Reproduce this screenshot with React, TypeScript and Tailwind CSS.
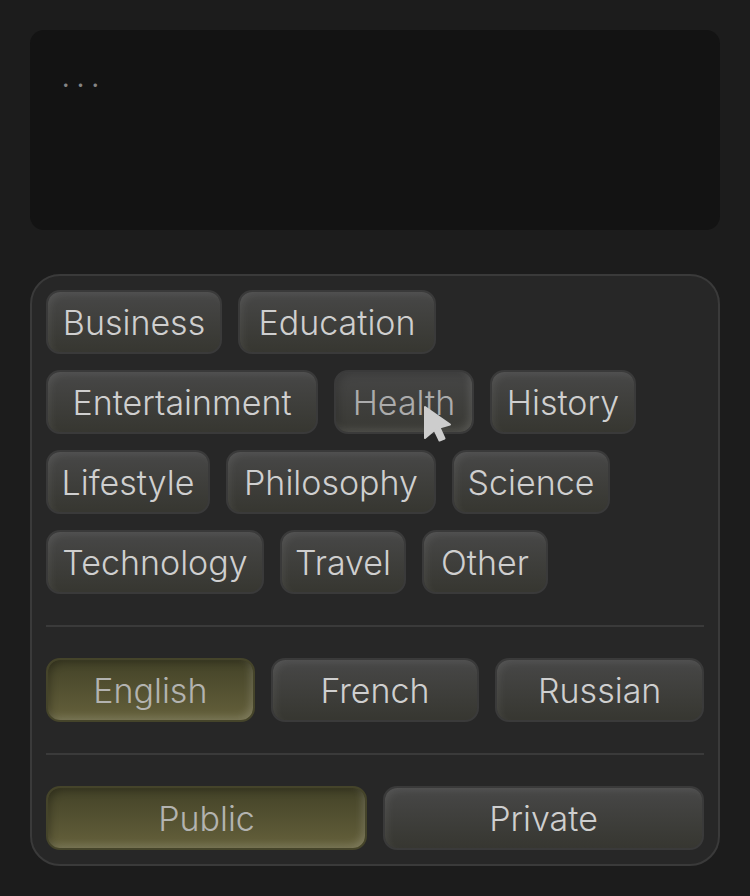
import { useState } from "react";
import clsx from "clsx";

const topics = [
  { name: "Business", width: "w-[176px]" },
  { name: "Education", width: "w-[198px]" },
  { name: "Entertainment", width: "w-[272px]" },
  { name: "Health", width: "w-[140px]" },
  { name: "History", width: "w-[146px]" },
  { name: "Lifestyle", width: "w-[164px]" },
  { name: "Philosophy", width: "w-[210px]" },
  { name: "Science", width: "w-[158px]" },
  { name: "Technology", width: "w-[218px]" },
  { name: "Travel", width: "w-[126px]" },
  { name: "Other", width: "w-[126px]" },
];

const looks = {
  idle: "border-[#3a3a3a] bg-linear-to-b from-[#484848] to-[#363630] text-[#cfcfcf] shadow-[inset_4px_4px_8px_-2px_#ffffff14]",
  pressed:
    "border-[#3a3a3a] bg-linear-to-b from-[#464646] to-[#393934] text-[#acacac] shadow-[inset_4px_4px_8px_-2px_#0000002e,inset_-4px_-4px_8px_-2px_#ffffff24]",
  active:
    "border-[#45442a] bg-linear-to-b from-[#424127] to-[#66623c] text-[#b3b3b0] shadow-[inset_4px_4px_8px_-2px_#0000004d,inset_-4px_-4px_8px_-2px_#ffffff30]",
};

type ChipProps = {
  label: string;
  look: keyof typeof looks;
  width: string;
  onClick?: () => void;
};

function Chip({ label, look, width, onClick }: ChipProps) {
  return (
    <button
      type="button"
      aria-pressed={look === "active"}
      onClick={onClick}
      className={clsx(
        "flex h-16 items-center justify-center rounded-[14px] border-2 bg-origin-border pt-0.5 text-[34px] leading-10 font-light whitespace-nowrap",
        looks[look],
        width,
      )}
    >
      {label}
    </button>
  );
}

function Pointer() {
  return (
    <svg
      className="pointer-events-none absolute top-[34px] left-[89px] h-10 w-8"
      viewBox="0 0 32 40"
      fill="#cdcdcd"
      stroke="#cdcdcd"
      strokeWidth="2"
      strokeLinejoin="round"
      aria-hidden="true"
    >
      <path d="M2 3 L27 20.500 L16.500 23.500 L21.500 34.500 L16.500 36.500 L11.500 26 L2 34 Z" />
    </svg>
  );
}

function Choices({ options, initial }: { options: string[]; initial: string }) {
  const [chosen, setChosen] = useState(initial);
  return (
    <div className="flex gap-4">
      {options.map((option) => (
        <Chip
          key={option}
          label={option}
          look={option === chosen ? "active" : "idle"}
          width="min-w-0 flex-1"
          onClick={() => setChosen(option)}
        />
      ))}
    </div>
  );
}

export default function App() {
  return (
    <main className="flex min-h-screen flex-col gap-11 bg-[#1c1c1c] p-[30px] font-['Inter','Liberation_Sans',sans-serif]">
      <textarea
        aria-label="Message"
        placeholder=". . ."
        className="block h-[200px] w-full resize-none rounded-[14px] bg-[#131313] px-8 py-8 text-[26px] leading-8 text-[#cfcfcf] outline-none placeholder:text-[#858585]"
      />
      <section className="rounded-[30px] border-2 border-[#3a3a3a] bg-[#272727] p-3.5">
        <div className="flex flex-wrap gap-4">
          {topics.map(({ name, width }) =>
            name === "Health" ? (
              <div key={name} className="relative">
                <Chip label={name} look="pressed" width={width} />
                <Pointer />
              </div>
            ) : (
              <Chip key={name} label={name} look="idle" width={width} />
            ),
          )}
        </div>
        <hr className="my-[31px] border-t-2 border-[#3a3a3a]" />
        <Choices options={["English", "French", "Russian"]} initial="English" />
        <hr className="my-[31px] border-t-2 border-[#3a3a3a]" />
        <Choices options={["Public", "Private"]} initial="Public" />
      </section>
    </main>
  );
}
